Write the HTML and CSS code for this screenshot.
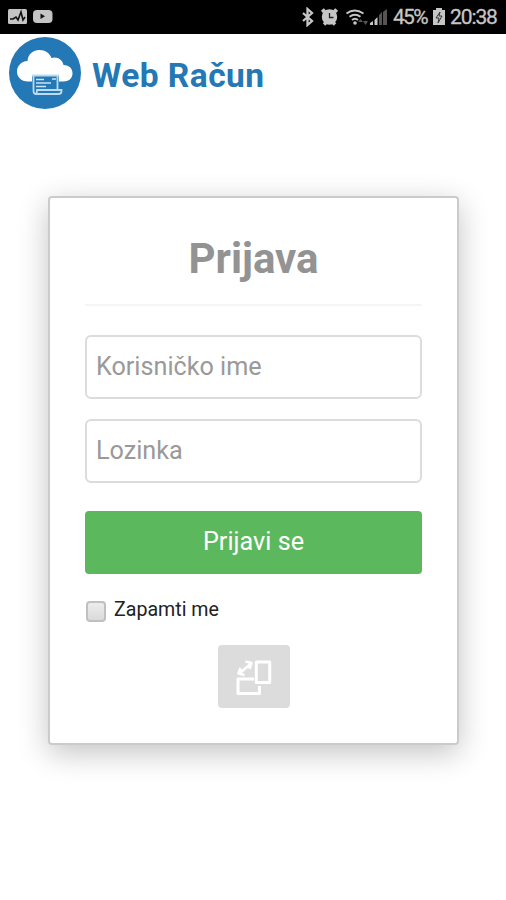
FILE: index.html
```html
<!DOCTYPE html>
<html lang="hr">
<head>
<meta charset="utf-8">
<title>Web Račun</title>
<link rel="stylesheet" href="styles.css">
</head>
<body>
<div class="status">
  <svg class="notices" width="48" height="20" viewBox="0 0 48 20">
    <rect x="0" y="2" width="19" height="15" rx="1.5" fill="#c4c4c4"/>
    <path d="M2 12h3l3-2 2 3 3-8 2 8 2-3" fill="none" stroke="#111" stroke-width="1.600"/>
    <rect x="25" y="3" width="19.500" height="13" rx="4" fill="#c4c4c4"/>
    <path d="M32.500 6.500v5.500l4.500-2.750z" fill="#111"/>
  </svg>
  <svg class="signals" width="86" height="20" viewBox="0 0 86 20">
    <path d="M2 6l9 8-4.500 4V2l4.500 4-9 8" fill="none" stroke="#c6c6c6" stroke-width="2.300"/>
    <g fill="none" stroke="#c6c6c6">
      <path d="M21 5l3-2.500M33 2.500l3 2.500M23 17.500l2-2M32 15.500l2 2" stroke-width="3.500"/>
      <circle cx="28.500" cy="10" r="7.700" fill="#c6c6c6" stroke="none"/>
      <path d="M28.500 6v4.500h4" stroke="#222" stroke-width="1.300"/>
      <path d="M45.500 6.500q8-6 17 0M48.500 9.800q5.500-4 11 0M51 13q3-2.500 6 0" stroke-width="2"/>
    </g>
    <circle cx="54" cy="16" r="1.800" fill="#c6c6c6"/>
    <path d="M57 15l2.500-3 2.500 3zM62 14h5l-2.500 4z" fill="#555"/>
    <path d="M69 18v-2l3-2v4zM73.500 18v-5l3-3v8z" fill="#c6c6c6"/>
    <path d="M78 18V8l3-3v13zM82 18V5l4-3v16z" fill="#555"/>
  </svg>
  <span class="percent">45%</span>
  <svg class="battery" width="12" height="20" viewBox="0 0 12 20">
    <path d="M0 3h3V1h6v2h3v15H0z" fill="#c6c6c6"/>
    <path d="M7 5l-4 6h3l-1 5 4-7H6z" fill="#c6c6c6" stroke="#333"/>
  </svg>
  <span class="clock">20:38</span>
</div>
<header class="brand">
  <svg width="72" height="72" viewBox="0 0 72 72">
    <circle cx="36" cy="36" r="36" fill="#2378b5"/>
    <path d="M19 44.500C12 44.500 8 40 8 34.500c0-5.500 4-10 10.500-10.500C19 17 24 13 30.500 13c6 0 10 3 12 8 6-2 11 2 12 7 6 0 9 4 9 8.500 0 5-4 8-9 8z" fill="#fff"/>
    <path d="M23 38h27v20H23z" fill="#2378b5"/>
    <path d="M23 38.500h27M24.500 39v14.500c0 4.500 3.500 4.500 3.500 0v-.500h24.500v1q0 3-3 3H26M48.500 39v14" fill="none" stroke="#b9dcee" stroke-width="1.800"/>
    <path d="M27 42.500h8M27 46h15M27 49.500h10M43 42h4" stroke="#c9e4f2" stroke-width="1.600"/>
  </svg>
  <span class="brand-name">Web Račun</span>
</header>
<form class="card">
  <h1>Prijava</h1>
  <input class="field" type="text" placeholder="Korisničko ime">
  <input class="field" type="password" placeholder="Lozinka">
  <button class="submit" type="button">Prijavi se</button>
  <label class="remember"><input type="checkbox"><span>Zapamti me</span></label>
  <button class="devices" type="button" aria-label="Uređaji">
    <svg width="36" height="36" viewBox="0 0 36 36" fill="none" stroke="#fff" stroke-linejoin="round">
      <path d="M20.300 2h13.400v20.500H20.300z" stroke-width="3"/>
      <path d="M18 19H2v14.500h21.500V26" stroke-width="3"/>
      <path d="M4 13L14.500 4M4.500 8L2.500 13.500l6 1.500M9.500 1.500l6 1.500-2 6" stroke-width="2.600"/>
    </svg>
  </button>
</form>
</body>
</html>
```
FILE: styles.css
```css
* { box-sizing: border-box; }
body {
  margin: 0;
  height: 900px;
  overflow: hidden;
  background: #fff;
  font-family: Roboto, "Liberation Sans", sans-serif;
}
.status {
  display: flex;
  align-items: center;
  height: 34px;
  padding: 0 9px 0 8px;
  background: #000;
  color: #c6c6c6;
  font-size: 21px;
  line-height: 34px;
}
.signals { margin-left: auto; margin-right: 6px; }
.percent { width: 35px; white-space: nowrap; letter-spacing: -1.700px; }
.battery { margin: 0 5px 0 5px; }
.clock { width: 47px; white-space: nowrap; letter-spacing: -1.100px; }
.percent, .clock { -webkit-text-stroke: 0.3px #c6c6c6; }
.brand {
  display: flex;
  height: 162px;
  padding: 3px 0 0 9px;
}
.brand-name {
  margin: 19px 0 0 11px;
  color: #2378b5;
  font-size: 33.500px;
  font-weight: 700;
  letter-spacing: 0.45px;
  line-height: 40px;
}
.card {
  display: flex;
  flex-direction: column;
  width: 411px;
  height: 549px;
  margin-left: 48px;
  padding: 35px 35px 0;
  border: 2px solid #cbcbcb;
  border-radius: 4px;
  background: #fff;
  box-shadow: 0 8px 30px rgba(0, 0, 0, 0.24);
}
h1 {
  height: 73px;
  margin: 0 0 29px;
  border-bottom: 2px solid #f5f5f5;
  color: #939393;
  font-size: 42px;
  font-weight: 700;
  line-height: 52px;
  text-align: center;
}
.field {
  flex: none;
  width: 337px;
  height: 64px;
  margin-bottom: 20px;
  padding: 0 9px 1px;
  border: 2px solid #dcdcdc;
  border-radius: 6px;
  background: #fff;
  font: 25.200px Roboto, sans-serif;
}
.field::placeholder { color: #999; opacity: 1; }
.submit {
  height: 63px;
  margin-top: 8px;
  padding: 0 0 2px;
  border: 0;
  border-radius: 4px;
  background: #5cb85c;
  color: #fff;
  font: 25.200px Roboto, sans-serif;
}
.remember {
  display: flex;
  height: 27px;
  margin-top: 24px;
  color: #222;
  font-size: 19.600px;
  line-height: 24px;
}
.remember input {
  appearance: none;
  width: 20px;
  height: 21px;
  margin: 3px 8px 0 1px;
  border: 2px solid #c0c0c0;
  border-radius: 4px;
  background: linear-gradient(#ececec, #dadada);
}
.devices {
  display: flex;
  align-items: center;
  justify-content: center;
  align-self: center;
  width: 72px;
  height: 63px;
  margin-top: 20px;
  padding: 2px 0 0;
  border: 0;
  border-radius: 4px;
  background: #dcdcdc;
}
```
